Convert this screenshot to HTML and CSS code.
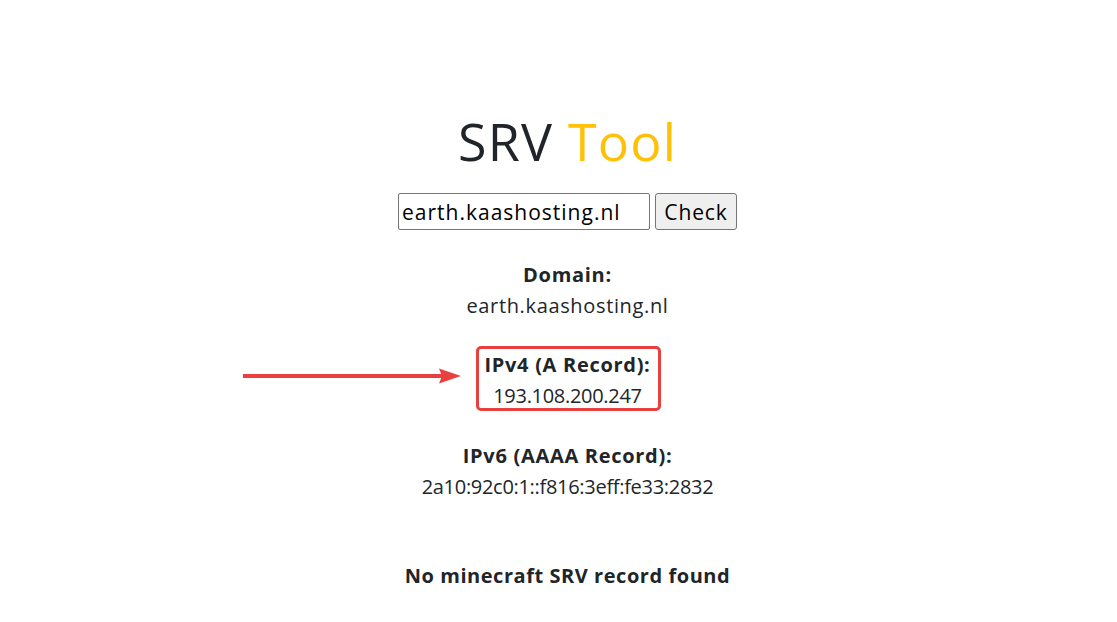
FILE: index.html
```html
<!DOCTYPE html>
<html lang="en">
<head>
  <meta charset="UTF-8" />
  <meta name="viewport" content="width=device-width, initial-scale=1.0"/>
  <title>SRV Tool</title>
  <link rel="stylesheet" href="styles.css">
</head>
<body>

  <main class="page">
    <h1 class="title">SRV <span class="accent">Tool</span></h1>

    <form class="lookup">
      <input type="text" class="lookup-input" value="earth.kaashosting.nl" />
      <button type="button" class="lookup-btn">Check</button>
    </form>

    <div class="results">
      <div class="record">
        <div class="record-label">Domain:</div>
        <div class="record-value host">earth.kaashosting.nl</div>
      </div>

      <!-- annotation: red frame + arrow drawn over the record -->
      <div class="record highlight">
        <span class="marker"></span>
        <svg class="arrow" width="218" height="16" viewBox="0 0 218 16">
          <rect x="0" y="6" width="202" height="4" fill="#e8403f" />
          <path d="M196 0.5 L218 8 L196 15.5 L199 8 Z" fill="#e8403f" />
        </svg>
        <div class="record-label">IPv4 (A Record):</div>
        <div class="record-value ip">193.108.200.247</div>
      </div>

      <div class="record">
        <div class="record-label">IPv6 (AAAA Record):</div>
        <div class="record-value ip">2a10:92c0:1::f816:3eff:fe33:2832</div>
      </div>
    </div>

    <p class="srv-none">No minecraft SRV record found</p>
  </main>

</body>
</html>
```

FILE: styles.css
```css
body {
  margin: 0;
  background-color: #fff;
  color: #212529;
  font-family: "Open Sans", "Liberation Sans", sans-serif;
}

.page {
  display: flex;
  flex-direction: column;
  align-items: center;
  padding: 110px 0 0 18px;
  text-align: center;
}

.title {
  margin: 0;
  font-size: 52px;
  font-weight: 400;
  line-height: 62px;
  letter-spacing: 1.2px;
}

.accent {
  color: #ffc107;
}

.lookup {
  display: flex;
  gap: 5px;
  margin-top: 21px;
}

.lookup-input {
  width: 252px;
  height: 37px;
  box-sizing: border-box;
  padding: 0 3px;
  border: 1px solid #767676;
  border-radius: 2px;
  font-family: inherit;
  font-size: 21px;
  letter-spacing: 1px;
  color: #000;
}

.lookup-btn {
  width: 82px;
  height: 37px;
  padding: 0;
  border: 1px solid #767676;
  border-radius: 3px;
  background-color: #efefef;
  font-family: inherit;
  font-size: 21px;
  letter-spacing: 0.9px;
  color: #000;
}

.results {
  display: flex;
  flex-direction: column;
  align-items: center;
  gap: 28.5px;
  margin-top: 28.5px;
}

.record-label {
  font-size: 20px;
  font-weight: 700;
  line-height: 31px;
  letter-spacing: 0.7px;
}

.record-value {
  font-size: 20px;
  font-weight: 400;
  line-height: 31px;
}

.record-value.host {
  letter-spacing: 0.65px;
}

.record-value.ip {
  letter-spacing: -0.3px;
}

.highlight {
  position: relative;
}

.marker {
  position: absolute;
  top: -3px;
  bottom: 0;
  left: -8px;
  right: -10px;
  border: 3px solid #e8403f;
  border-radius: 5px;
}

.arrow {
  position: absolute;
  right: calc(100% + 23px);
  top: 19px;
}

.srv-none {
  margin: 58px 0 0;
  font-size: 20px;
  font-weight: 700;
  line-height: 31px;
  letter-spacing: 0.55px;
}
```
